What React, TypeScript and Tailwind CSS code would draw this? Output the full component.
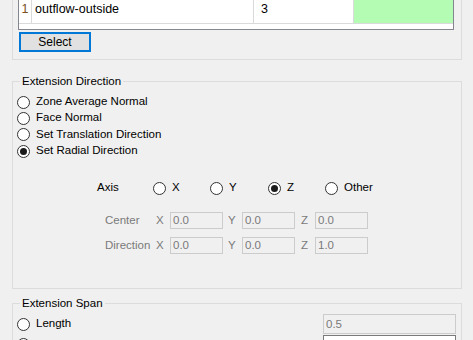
import React from 'react';

const Radio = ({ checked = false }: { checked?: boolean }) => (
  <span className="w-[13px] h-[13px] rounded-full border border-[#333333] bg-white flex items-center justify-center shrink-0">
    {checked && <span className="w-[7px] h-[7px] rounded-full bg-[#1a1a1a]" />}
  </span>
);

const RadioRow = ({ label, checked = false, tall = false }: { label: string; checked?: boolean; tall?: boolean }) => (
  <div className={`${tall ? 'h-[17px]' : 'h-[16px]'} flex items-center gap-[6px]`}>
    <Radio checked={checked} />
    <span>{label}</span>
  </div>
);

const AxisOption = ({ label, checked = false, width }: { label: string; checked?: boolean; width: string }) => (
  <div className={`flex items-center gap-[6px] ${width}`}>
    <Radio checked={checked} />
    <span>{label}</span>
  </div>
);

const Field = ({ value }: { value: string }) => (
  <div className="w-[53px] h-[17px] border border-[#cccccc] bg-[#f0f0f0] text-[#7a7a7a] pl-[2px] leading-[15px]">
    {value}
  </div>
);

const VectorRow = ({ label, values }: { label: string; values: string[] }) => (
  <div className="flex items-center h-[17px] pl-[92px] text-[#7a7a7a]">
    <span className="w-[51px]">{label}</span>
    <span className="w-[14px]">X</span>
    <Field value={values[0]} />
    <span className="w-[14px] ml-[5px]">Y</span>
    <Field value={values[1]} />
    <span className="w-[14px] ml-[6px]">Z</span>
    <Field value={values[2]} />
  </div>
);

const GroupTitle = ({ title }: { title: string }) => (
  <span className="absolute left-[7px] top-[-8px] px-[2px] bg-[#f0f0f0] leading-[14px]">{title}</span>
);

export default function App() {
  return (
    <div className="w-[473px] h-[340px] overflow-hidden bg-[#f0f0f0] text-black text-[11.5px] font-['Liberation_Sans',sans-serif]">
      {/* Zone selection */}
      <div className="ml-3 w-[450px] h-[60px] border-x border-b border-[#dcdcdc] pl-[5px]">
        <div className="w-[436px] h-[30px] border-x border-b border-[#828790] bg-white">
          <div className="flex h-[24px] border-b border-[#dadada] text-[12.5px]">
            <div className="w-[13px] border-r border-[#dadada] text-[#7a5020] flex items-center justify-center pb-[4px]">1</div>
            <div className="w-[222px] border-r border-[#dadada] pl-[3px] flex items-center pb-[4px]">outflow-outside</div>
            <div className="w-[100px] border-r border-[#dadada] pl-[7px] flex items-center pb-[4px]">3</div>
            <div className="flex-1 bg-[#b4fcb4]" />
          </div>
        </div>
        <button className="mt-[2px] ml-[1px] w-[72px] h-[20px] border-2 border-[#0078d7] bg-[#e1e1e1] text-[12px] leading-[16px]">
          Select
        </button>
      </div>

      {/* Extension Direction */}
      <div className="relative mt-[21px] ml-3 w-[450px] h-[208px] border border-[#dcdcdc]">
        <GroupTitle title="Extension Direction" />
        <div className="pt-[12px] pl-[4px] flex flex-col">
          <RadioRow label="Zone Average Normal" />
          <RadioRow label="Face Normal" />
          <RadioRow label="Set Translation Direction" tall />
          <RadioRow label="Set Radial Direction" checked />
        </div>
        <div className="mt-[21px] pl-[84px] h-[16px] flex items-center">
          <span className="w-[56px]">Axis</span>
          <AxisOption label="X" width="w-[57px]" />
          <AxisOption label="Y" width="w-[58px]" />
          <AxisOption label="Z" checked width="w-[57px]" />
          <AxisOption label="Other" width="w-[80px]" />
        </div>
        <div className="mt-[16px]">
          <VectorRow label="Center" values={['0.0', '0.0', '0.0']} />
        </div>
        <div className="mt-[8px]">
          <VectorRow label="Direction" values={['0.0', '0.0', '1.0']} />
        </div>
      </div>

      {/* Extension Span */}
      <div className="relative mt-[14px] ml-3 w-[450px] h-[80px] border border-[#dcdcdc]">
        <GroupTitle title="Extension Span" />
        <div className="pt-[10px] pl-[4px] pr-[5px]">
          <div className="flex items-center h-[20px]">
            <div className="flex items-center gap-[6px]">
              <Radio />
              <span>Length</span>
            </div>
            <div className="ml-auto w-[133px] h-[20px] border border-[#cccccc] bg-[#f0f0f0] text-[#7a7a7a] pl-[2px] leading-[18px]">
              0.5
            </div>
          </div>
          <div className="flex items-start h-[20px] mt-[1px]">
            <div className="mt-[3px]">
              <Radio />
            </div>
            <div className="ml-auto w-[133px] h-[20px] border border-[#7a7a7a] bg-white" />
          </div>
        </div>
      </div>
    </div>
  );
}
